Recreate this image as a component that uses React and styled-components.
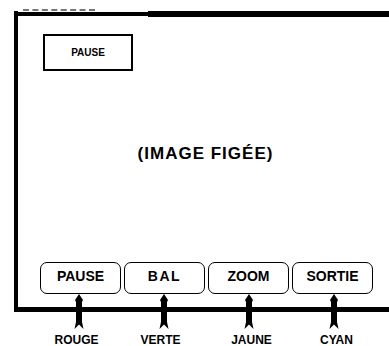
import React from "react";
import styled, { createGlobalStyle } from "styled-components";

const Global = createGlobalStyle`
  html, body { margin: 0; padding: 0; background: #fff; }
  body { width: 389px; height: 346px; overflow: hidden; font-family: "Liberation Sans", Arial, sans-serif; color: #000; }
`;

const Page = styled.div`
  width: 389px;
  height: 346px;
  padding-top: 9px;
  box-sizing: border-box;
`;

const ScanMark = styled.div`
  margin-left: 23px;
  width: 72px;
  height: 0;
  border-top: 2px dashed #777;
`;

const Frame = styled.div`
  margin-left: 14px;
  width: 375px;
  height: 301px;
  box-sizing: border-box;
  border-left: 4px solid #000;
  border-bottom: 5px solid #000;
  display: flex;
  flex-direction: column;
`;

const TopEdge = styled.div`
  margin-left: -4px;
  height: 6px;
  display: flex;
  align-items: flex-start;
`;

const ThinEdge = styled.div`
  width: 134px;
  height: 4px;
  margin-top: 1px;
  background: #000;
`;

const ThickEdge = styled.div`
  flex: 1;
  height: 6px;
  background: #000;
`;

const PauseBox = styled.div`
  margin: 17px 0 0 25px;
  width: 90px;
  height: 37px;
  box-sizing: border-box;
  border: 2px solid #000;
  display: flex;
  align-items: center;
  justify-content: center;
  font-size: 10px;
  font-weight: bold;
`;

const Title = styled.div`
  margin-top: 73px;
  padding-left: 4px;
  text-align: center;
  font-size: 17px;
  line-height: 20px;
  font-weight: bold;
  letter-spacing: 1px;
`;

const ButtonRow = styled.div`
  margin-top: auto;
  margin-left: 22px;
  padding-bottom: 13px;
  display: grid;
  grid-template-columns: repeat(4, 81px);
  gap: 3px;
`;

const SoftKey = styled.div`
  height: 32px;
  box-sizing: border-box;
  border: 1.5px solid #000;
  border-radius: 7px;
  padding-top: 5px;
  text-align: center;
  font-size: 14px;
  line-height: 16px;
  font-weight: bold;
  letter-spacing: ${(p) => p.$spacing || 0}px;
`;

const Legend = styled.div`
  position: relative;
  margin-top: -18px;
  margin-left: 38px;
  display: grid;
  grid-template-columns: repeat(4, 81px);
  gap: 4px;
`;

const LegendCell = styled.div`
  display: flex;
  flex-direction: column;
  align-items: center;
`;

const Pointer = styled.svg`
  display: block;
  width: 10px;
  height: 36px;
`;

const ColorLabel = styled.div`
  margin-top: 4px;
  font-size: 12px;
  line-height: 12px;
  font-weight: bold;
  margin-left: ${(p) => p.$shift || 0}px;
`;

const keys = [
  { label: "PAUSE", color: "ROUGE", shift: -4 },
  { label: "BAL", color: "VERTE", shift: -6, spacing: 1.5 },
  { label: "ZOOM", color: "JAUNE", shift: 6 },
  { label: "SORTIE", color: "CYAN", shift: 6 },
];

function Arrow() {
  return (
    <Pointer viewBox="0 0 10 36">
      <polygon
        points="5,0 9,6 8,8 8,28 9.5,35 5,30.5 0.5,35 2,28 2,8 1,6"
        fill="#000"
      />
    </Pointer>
  );
}

export default function App() {
  return (
    <>
      <Global />
      <Page>
        <ScanMark />
        <Frame>
          <TopEdge>
            <ThinEdge />
            <ThickEdge />
          </TopEdge>
          <PauseBox>PAUSE</PauseBox>
          <Title>(IMAGE FIGÉE)</Title>
          <ButtonRow>
            {keys.map((k) => (
              <SoftKey key={k.label} $spacing={k.spacing}>
                {k.label}
              </SoftKey>
            ))}
          </ButtonRow>
        </Frame>
        <Legend>
          {keys.map((k) => (
            <LegendCell key={k.color}>
              <Arrow />
              <ColorLabel $shift={k.shift}>{k.color}</ColorLabel>
            </LegendCell>
          ))}
        </Legend>
      </Page>
    </>
  );
}
